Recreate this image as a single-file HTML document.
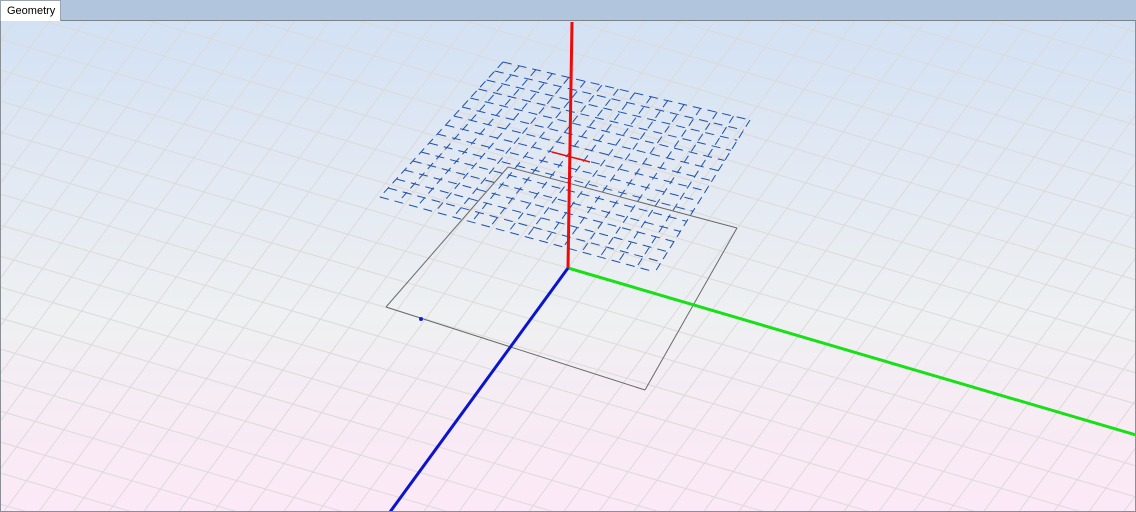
<!DOCTYPE html>
<html><head><style>
html,body{margin:0;padding:0;width:1136px;height:512px;overflow:hidden;background:#b1c5dd;font-family:"Liberation Sans",sans-serif}
.tab{position:absolute;left:0;top:0;width:61px;height:21px;background:#fff;border:1px solid #9aa4b0;border-bottom:none;box-sizing:border-box;font-size:11px;line-height:21px;padding-left:6px;color:#000;z-index:2}
.view{position:absolute;left:0;top:20px;width:1136px;height:492px;border:1px solid #8a8f96;border-top:1px solid #7c828a;box-sizing:border-box;background:linear-gradient(#d2e1f4 0%,#e2e9f3 30%,#eef0f2 60%,#f7ebf4 80%,#fce9f7 100%);overflow:hidden}
svg{display:block;position:absolute;left:-1px;top:-1px}
</style></head><body>
<div class="tab">Geometry</div>
<div class="view"><svg id="s" width="1136" height="492" viewBox="0 20 1136 492" xmlns="http://www.w3.org/2000/svg"></svg></div>
<script>
var s=document.getElementById('s'),ns='http://www.w3.org/2000/svg';
function L(x1,y1,x2,y2,c,w,d){var l=document.createElementNS(ns,'line');l.setAttribute('x1',x1);l.setAttribute('y1',y1);l.setAttribute('x2',x2);l.setAttribute('y2',y2);l.setAttribute('stroke',c);l.setAttribute('stroke-width',w);if(d)l.setAttribute('stroke-dasharray',d);s.appendChild(l);}
var g='#dcdad9';
for(var k=-40;k<40;k++){var y0=268+k*31;L(-200,y0-768*0.294,1400,y0+832*0.294,g,1);}
for(var k=-30;k<40;k++){var x0=568+k*35;var dx=-0.7355;L(x0+dx*(-400),268-400,x0+dx*400,268+400,g,1);}
var sq=[[508,167],[737,228],[645,390],[386,307]];
for(var i=0;i<4;i++){var a=sq[i],b=sq[(i+1)%4];L(a[0],a[1],b[0],b[1],'#6a6a6a',1);}
var T=[503,62],R=[750,120],B=[655,272],Lf=[380,197],n=15;
function lerp(a,b,t){return[a[0]+(b[0]-a[0])*t,a[1]+(b[1]-a[1])*t];}
for(var i=0;i<=n;i++){var t=i/n;var p=lerp(T,R,t),q=lerp(Lf,B,t);L(p[0],p[1],q[0],q[1],'#1d4fae',1,'8 5');
var p2=lerp(T,Lf,t),q2=lerp(R,B,t);L(p2[0],p2[1],q2[0],q2[1],'#1d4fae',1,'9 6');}
L(568,268,1136,435,'#18e018',3);
L(568,268,390,512,'#0a14d0',3);
L(572,22,568,268,'#ee0a0a',3);
L(552,152,590,162,'#ee0a0a',1.5);
var c=document.createElementNS(ns,'circle');c.setAttribute('cx',421);c.setAttribute('cy',319);c.setAttribute('r',2);c.setAttribute('fill','#1020d0');s.appendChild(c);
</script>
</body></html>
